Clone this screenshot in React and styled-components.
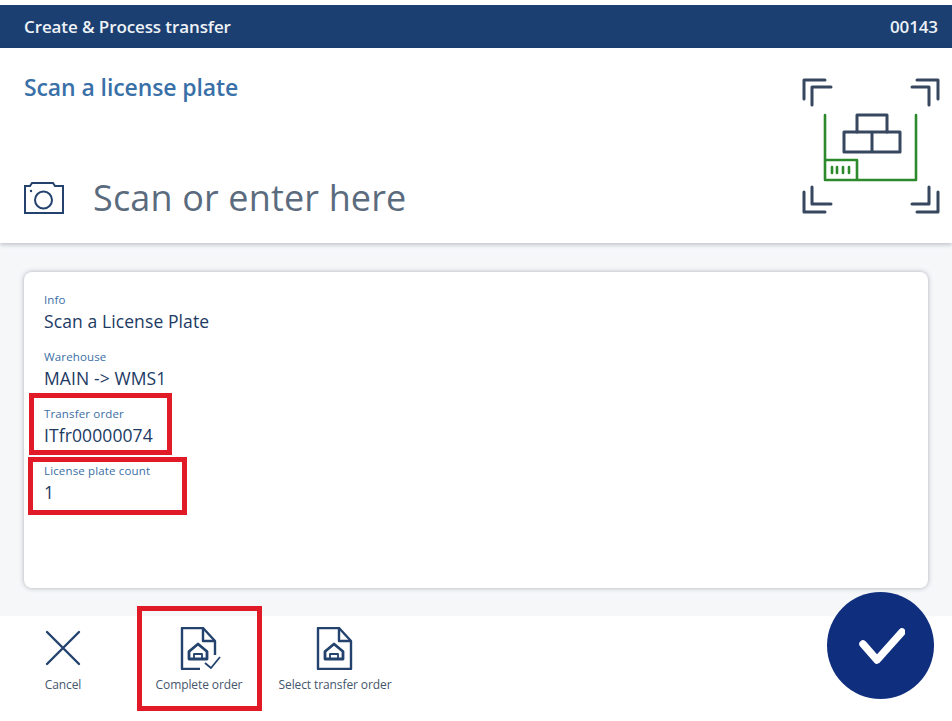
import React from 'react';
import styled, { createGlobalStyle } from 'styled-components';

const GlobalStyle = createGlobalStyle`
  html, body {
    margin: 0;
    padding: 0;
    height: 100%;
    background: #ffffff;
    font-family: "Open Sans", "Noto Sans", sans-serif;
  }
  #root {
    height: 100%;
  }
`;

const Page = styled.div`
  position: relative;
  height: 721px;
  padding-top: 5px;
  box-sizing: border-box;
  display: flex;
  flex-direction: column;
  overflow: hidden;
`;

const Header = styled.header`
  height: 43px;
  flex: none;
  padding: 0 14px 0 24px;
  display: flex;
  align-items: center;
  justify-content: space-between;
  background: #1b3f70;
  color: #eef2f7;
  font-size: 17px;
  font-weight: 600;
  letter-spacing: -0.1px;
`;

const ScanPanel = styled.section`
  position: relative;
  z-index: 1;
  height: 195px;
  flex: none;
  padding: 0 10px 0 24px;
  display: flex;
  justify-content: space-between;
  background: #ffffff;
  box-shadow: 0 2px 4px rgba(60, 70, 85, 0.28);
`;

const ScanLeft = styled.div`
  display: flex;
  flex-direction: column;
  justify-content: space-between;
  padding: 24px 0 23px;
`;

const ScanTitle = styled.h1`
  margin: 0;
  color: #3a70a8;
  font-size: 23px;
  line-height: 31px;
  font-weight: 600;
  letter-spacing: -0.1px;
`;

const ScanInputRow = styled.div`
  display: flex;
  align-items: center;
  gap: 29px;
`;

const ScanPlaceholder = styled.span`
  color: #5b6b7e;
  font-size: 36px;
  line-height: 44px;
  letter-spacing: 0.15px;
`;

const Main = styled.main`
  flex: 1;
  padding: 29px 24px 28px;
  background: #f6f7f9;
  display: flex;
`;

const Card = styled.div`
  flex: 1;
  padding: 20px;
  box-sizing: border-box;
  background: #ffffff;
  border-radius: 8px;
  box-shadow: 0 0 5px rgba(60, 70, 85, 0.4);
  display: flex;
  flex-direction: column;
  gap: 11px;
`;

const Field = styled.div`
  position: relative;
  height: 46px;
`;

const FieldLabel = styled.div`
  color: #3a6ea5;
  font-size: 11.5px;
  line-height: 16px;
  letter-spacing: 0.15px;
`;

const FieldValue = styled.div`
  color: #1c3a63;
  font-size: 17.5px;
  line-height: 26px;
  font-weight: 500;
  letter-spacing: 0.1px;
`;

const Highlight = styled.span`
  position: absolute;
  top: ${(p) => p.$top}px;
  left: ${(p) => p.$left}px;
  width: ${(p) => p.$width}px;
  height: ${(p) => p.$height}px;
  box-sizing: border-box;
  border: 5px solid #e01a26;
  pointer-events: none;
`;

const Footer = styled.footer`
  position: relative;
  height: 105px;
  flex: none;
  display: flex;
  gap: 10px;
  background: #ffffff;
`;

const ActionButton = styled.button`
  position: relative;
  width: 126px;
  padding: 11px 0 0;
  border: 0;
  background: none;
  font-family: inherit;
  display: flex;
  flex-direction: column;
  align-items: center;
  gap: 8px;
`;

const IconBox = styled.span`
  height: 42px;
  display: flex;
  align-items: center;
  justify-content: center;
`;

const ActionLabel = styled.span`
  color: #44566c;
  font-size: 12px;
  line-height: 16px;
  font-weight: 500;
  letter-spacing: -0.1px;
  white-space: nowrap;
`;

const Fab = styled.button`
  position: absolute;
  left: 827px;
  top: 592px;
  width: 107px;
  height: 107px;
  padding: 0;
  border: 0;
  border-radius: 50%;
  background: #0f2f7e;
  display: flex;
  align-items: center;
  justify-content: center;
`;

const navy = '#23426d';

const CameraIcon = () => (
  <svg width="40" height="33" viewBox="0 0 40 33" fill="none" stroke={navy} strokeWidth="2">
    <path d="M1 4H6L8 1H29L31 4H39V31H1Z" />
    <circle cx="19.5" cy="18" r="8.5" />
    <circle cx="7" cy="9" r="1.2" fill={navy} stroke="none" />
  </svg>
);

const PalletScanIcon = () => (
  <svg width="140" height="140" viewBox="802 76 140 140" fill="none" strokeLinecap="round" strokeLinejoin="round" style={{ marginTop: 28 }}>
    <g stroke="#37475f" strokeWidth="3">
      <path d="M804 99V80H825M812 105V87H831" />
      <path d="M938 99V80H917M929 105V87H912" />
      <path d="M804 192V212H825M812 187V204H831" />
      <path d="M938 192V212H917M929 187V204H912" />
    </g>
    <path d="M825 115V180H916V115M825 160H857V180" stroke="#2c8a2c" strokeWidth="2.6" />
    <path d="M832 167V173M837 167V173M843 167V173M849 167V173" stroke="#2c8a2c" strokeWidth="2.6" />
    <g stroke="#37475f" strokeWidth="3">
      <path d="M857 132V115H887V132" />
      <path d="M844 132H900V152H844ZM872 132V152" />
    </g>
  </svg>
);

const CloseIcon = () => (
  <svg width="36" height="36" viewBox="0 0 36 36" fill="none" stroke={navy} strokeWidth="2.4" strokeLinecap="round">
    <path d="M2 2L34 34M34 2L2 34" />
  </svg>
);

const HouseMark = () => (
  <>
    <path d="M9 32V24.5L18 17L27 24.5V32Z" strokeWidth="2.8" />
    <path d="M14 32V27H22V32" strokeWidth="1.8" />
  </>
);

const CompleteOrderIcon = () => (
  <svg width="41" height="43" viewBox="0 0 41 43" fill="none" stroke={navy} strokeWidth="2.4" strokeLinejoin="round" style={{ marginLeft: 3 }}>
    <path d="M35 28V14L23 1H2V42H20" />
    <path d="M23 1V14H35" />
    <HouseMark />
    <path d="M25 36L31 41L40 30" strokeWidth="1.8" />
  </svg>
);

const TransferOrderIcon = () => (
  <svg width="38" height="43" viewBox="0 0 38 43" fill="none" stroke={navy} strokeWidth="2.4" strokeLinejoin="round">
    <path d="M35 42V14L23 1H2V42Z" />
    <path d="M23 1V14H35" />
    <HouseMark />
  </svg>
);

const fields = [
  { label: 'Info', value: 'Scan a License Plate' },
  { label: 'Warehouse', value: 'MAIN -> WMS1' },
  { label: 'Transfer order', value: 'ITfr00000074', box: { top: -13, left: -15, width: 143, height: 62 } },
  { label: 'License plate count', value: '1', box: { top: -6, left: -16, width: 159, height: 58 } },
];

export default function App() {
  return (
    <>
      <GlobalStyle />
      <Page>
        <Header>
          <span>Create &amp; Process transfer</span>
          <span>00143</span>
        </Header>

        <ScanPanel>
          <ScanLeft>
            <ScanTitle>Scan a license plate</ScanTitle>
            <ScanInputRow>
              <CameraIcon />
              <ScanPlaceholder>Scan or enter here</ScanPlaceholder>
            </ScanInputRow>
          </ScanLeft>
          <PalletScanIcon />
        </ScanPanel>

        <Main>
          <Card>
            {fields.map((f) => (
              <Field key={f.label}>
                <FieldLabel>{f.label}</FieldLabel>
                <FieldValue>{f.value}</FieldValue>
                {f.box && <Highlight $top={f.box.top} $left={f.box.left} $width={f.box.width} $height={f.box.height} />}
              </Field>
            ))}
          </Card>
        </Main>

        <Footer>
          <ActionButton>
            <IconBox><CloseIcon /></IconBox>
            <ActionLabel>Cancel</ActionLabel>
          </ActionButton>
          <ActionButton>
            <IconBox><CompleteOrderIcon /></IconBox>
            <ActionLabel>Complete order</ActionLabel>
            <Highlight $top={-10} $left={1} $width={125} $height={105} />
          </ActionButton>
          <ActionButton>
            <IconBox><TransferOrderIcon /></IconBox>
            <ActionLabel>Select transfer order</ActionLabel>
          </ActionButton>
        </Footer>

        <Fab aria-label="Confirm">
          <svg width="48" height="36" viewBox="0 0 48 36" fill="none" stroke="#ffffff" strokeWidth="7.5" strokeLinecap="round" strokeLinejoin="round">
            <path d="M6 16L20 32L45 4" />
          </svg>
        </Fab>
      </Page>
    </>
  );
}
